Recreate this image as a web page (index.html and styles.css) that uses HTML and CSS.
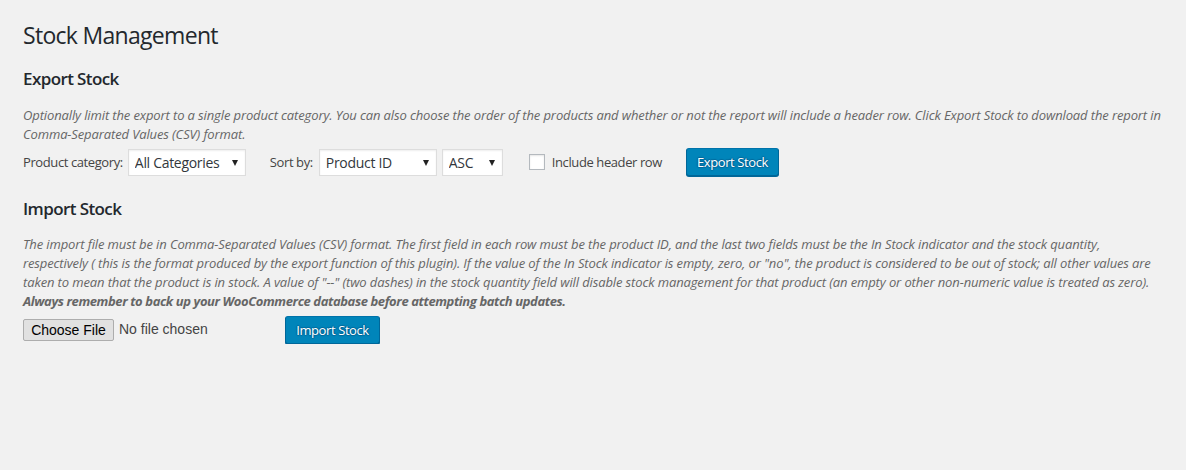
FILE: index.html
```html
<!DOCTYPE html>
<html lang="en">
<head>
<meta charset="utf-8">
<title>Stock Management</title>
<link rel="stylesheet" href="styles.css">
</head>
<body>
<div class="wrap">
  <h1 class="page-title">Stock Management</h1>

  <h2 class="section-title">Export Stock</h2>
  <p class="description">Optionally limit the export to a single product category. You can also choose the order of the products and whether or not the report will include a header row. Click Export Stock to download the report in Comma-Separated Values (CSV) format.</p>
  <form class="export-row">
    <label class="field-label">Product category:</label>
    <span class="select-wrap select-category"><select class="select"><option>All Categories</option></select></span>
    <label class="field-label sort-label">Sort by:</label>
    <span class="select-wrap select-sort"><select class="select"><option>Product ID</option></select></span>
    <span class="select-wrap select-order"><select class="select"><option>ASC</option></select></span>
    <span class="checkbox"></span>
    <span class="checkbox-label">Include header row</span>
    <button type="button" class="button-primary export-btn">Export Stock</button>
  </form>

  <h2 class="section-title import-title">Import Stock</h2>
  <p class="description import-desc">The import file must be in Comma-Separated Values (CSV) format. The first field in each row must be the product ID, and the last two fields must be the In Stock indicator and the stock quantity, respectively ( this is the format produced by the export function of this plugin). If the value of the In Stock indicator is empty, zero, or "no", the product is considered to be out of stock; all other values are taken to mean that the product is in stock. A value of "--" (two dashes) in the stock quantity field will disable stock management for that product (an empty or other non-numeric value is treated as zero). <strong class="warning">Always remember to back up your WooCommerce database before attempting batch updates.</strong></p>
  <div class="import-row">
    <span class="file-input"><span class="file-button">Choose File</span><span class="file-name">No file chosen</span></span>
    <button type="button" class="button-primary import-btn">Import Stock</button>
  </div>
</div>
</body>
</html>
```

FILE: styles.css
```css
html, body {
  margin: 0;
  padding: 0;
  background: #f1f1f1;
}
body {
  font-family: "Open Sans", "Noto Sans", sans-serif;
  font-size: 13px;
  color: #444;
  line-height: 1.4;
}
.wrap {
  padding: 20px 20px 0 23px;
}
.page-title {
  margin: 0;
  font-size: 23px;
  font-weight: 400;
  line-height: 30px;
  color: #23282d;
  letter-spacing: -0.7px;
}
.section-title {
  margin: 18px 0 0;
  font-size: 17px;
  font-weight: 600;
  line-height: 22px;
  color: #23282d;
  letter-spacing: -0.6px;
}
.import-title {
  margin-top: 22px;
}
.description {
  margin: 16px 0 0;
  font-style: italic;
  color: #666;
  font-size: 13px;
  line-height: 18.5px;
  letter-spacing: -0.12px;
}
.import-desc {
  margin-top: 15px;
  line-height: 19px;
}
.warning {
  letter-spacing: -0.4px;
}
.export-row {
  display: flex;
  align-items: center;
  margin-top: 5px;
  height: 28px;
}
.field-label {
  color: #444;
  margin-right: 5px;
  letter-spacing: -0.4px;
}
.sort-label {
  margin-left: 24px;
  margin-right: 6px;
}
.select-wrap {
  position: relative;
  display: inline-block;
  height: 27px;
}
.select-wrap::after {
  content: "";
  position: absolute;
  top: 11px;
  right: 8px;
  border-left: 3px solid transparent;
  border-right: 3px solid transparent;
  border-top: 6px solid #222;
  pointer-events: none;
}
.select {
  -webkit-appearance: none;
  appearance: none;
  height: 27px;
  width: 100%;
  margin: 0;
  border: 1px solid #ddd;
  border-radius: 0;
  background: #fff;
  box-shadow: inset 0 1px 2px rgba(0, 0, 0, 0.07);
  font-family: inherit;
  font-size: 14px;
  color: #32373c;
  padding: 0 6px;
  letter-spacing: -0.3px;
}
.select-category { width: 118px; }
.select-sort { width: 118px; margin-right: 5px; }
.select-order { width: 61px; }
.checkbox {
  display: inline-block;
  width: 14px;
  height: 14px;
  border: 1px solid #b4b9be;
  background: #fff;
  box-shadow: inset 0 1px 2px rgba(0, 0, 0, 0.1);
  margin-left: 26px;
  margin-right: 7px;
}
.checkbox-label {
  color: #444;
  letter-spacing: -0.4px;
}
.button-primary {
  display: inline-block;
  height: 28px;
  padding: 0 0 1px;
  border: 1px solid;
  border-color: #0073aa #006799 #006799;
  border-radius: 3px;
  background: #0085ba;
  box-shadow: 0 1px 0 #006799;
  color: #fff;
  text-shadow: 0 -1px 1px #006799, 1px 0 1px #006799, 0 1px 1px #006799, -1px 0 1px #006799;
  font-family: inherit;
  font-size: 13px;
  line-height: 26px;
  letter-spacing: -0.4px;
  white-space: nowrap;
  text-align: center;
  cursor: pointer;
  box-sizing: border-box;
}
.export-btn {
  margin-left: 24px;
  width: 93px;
  margin-top: -1px;
}
.import-row {
  display: flex;
  align-items: center;
  margin-top: 5px;
}
.file-input {
  display: inline-flex;
  align-items: center;
  width: 262px;
  font-family: "Liberation Sans", Arial, sans-serif;
}
.file-button {
  display: inline-block;
  box-sizing: border-box;
  width: 91px;
  height: 22px;
  line-height: 20px;
  text-align: center;
  border: 1px solid #adadad;
  border-radius: 2px;
  background: #e1e1e1;
  color: #000;
  font-size: 14px;
}
.file-name {
  margin-left: 5px;
  color: #444;
  font-size: 14px;
}
.import-btn {
  width: 95px;
}
```
